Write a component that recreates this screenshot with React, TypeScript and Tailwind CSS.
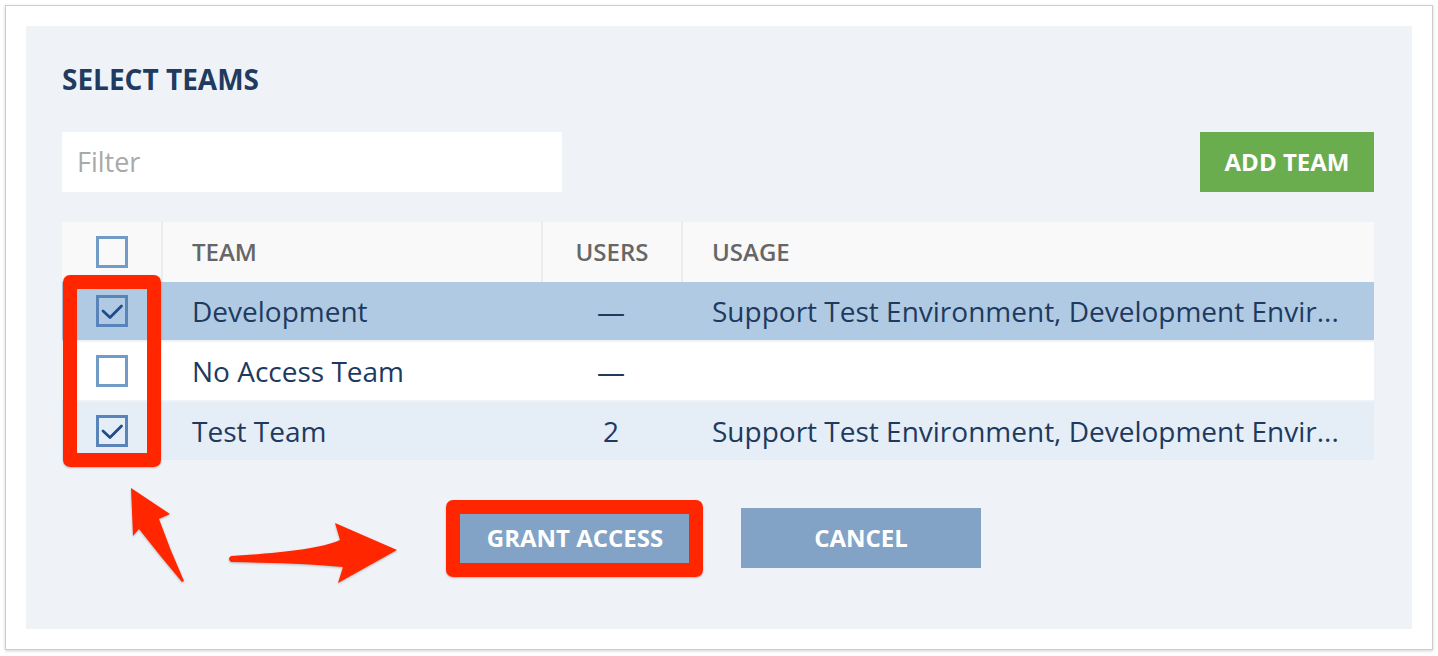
const font = { fontFamily: '"Open Sans", "Noto Sans", sans-serif' };

type Team = {
  name: string;
  users: string;
  usage: string;
  checked: boolean;
  bg: string;
};

const teams: Team[] = [
  {
    name: 'Development',
    users: '—',
    usage: 'Support Test Environment, Development Envir...',
    checked: true,
    bg: 'bg-[#b1cae3]',
  },
  { name: 'No Access Team', users: '—', usage: '', checked: false, bg: 'bg-white' },
  {
    name: 'Test Team',
    users: '2',
    usage: 'Support Test Environment, Development Envir...',
    checked: true,
    bg: 'bg-[#e5edf7]',
  },
];

function Checkbox({ checked }: { checked: boolean }) {
  return (
    <span
      className={`flex h-[32px] w-[32px] items-start justify-start border-[3px] ${
        checked ? 'border-[#5884b9]' : 'border-[#729bc8]'
      }`}
    >
      {checked && (
        <svg width="26" height="26" viewBox="0 0 26 26">
          <path
            d="M4 13 L11 19.5 L22.5 8"
            fill="none"
            stroke="#1f4d8a"
            strokeWidth="2.8"
            strokeLinecap="round"
            strokeLinejoin="round"
          />
        </svg>
      )}
    </span>
  );
}

export default function App() {
  return (
    <div className="relative h-[656px] w-[1438px] bg-white p-[5px]" style={font}>
      <div className="h-[645px] w-[1428px] border border-[#cdcdcd] bg-white p-[20px] shadow-[0_1px_3px_rgba(0,0,0,0.18)]">
        <div className="h-[603px] w-[1386px] bg-[#eff3f8] pl-[36px] pr-[38px] pt-[33px]">
          <h2 className="text-[28px] leading-[40px] font-bold text-[#1f3b60]">SELECT TEAMS</h2>

          <div className="mt-[33px] flex items-center justify-between">
            <div className="flex h-[60px] w-[500px] items-center bg-white pl-[15px] text-[27px] text-[#a9a9a9]">
              Filter
            </div>
            <button
              type="button"
              className="flex h-[60px] w-[174px] items-center justify-center bg-[#6aad4f] text-[24px] font-bold text-white"
            >
              ADD TEAM
            </button>
          </div>

          <div className="mt-[30px]">
            <div className="grid h-[60px] grid-cols-[99px_380px_140px_1fr] bg-[#f9f9f9] text-[24px] font-semibold text-[#666666]">
              <div className="flex items-center justify-center">
                <Checkbox checked={false} />
              </div>
              <div className="flex items-center border-l-2 border-[#ececec] pl-[29px]">TEAM</div>
              <div className="flex items-center justify-center border-l-2 border-[#ececec]">USERS</div>
              <div className="flex items-center border-l-2 border-[#ececec] pl-[29px]">USAGE</div>
            </div>
            {teams.map((t, i) => (
              <div
                key={t.name}
                className={`grid h-[58px] grid-cols-[99px_380px_140px_1fr] text-[28px] text-[#1e3a5f] ${t.bg} ${
                  i > 0 ? 'mt-[2px]' : ''
                }`}
              >
                <div className="flex items-center justify-center">
                  <Checkbox checked={t.checked} />
                </div>
                <div className="flex items-center pl-[31px]">{t.name}</div>
                <div className="flex items-center justify-center">{t.users}</div>
                <div className="flex items-center overflow-hidden pl-[31px] whitespace-nowrap">{t.usage}</div>
              </div>
            ))}
          </div>

          <div className="mt-[48px] flex justify-center gap-[46px]">
            <button
              type="button"
              className="flex h-[60px] w-[240px] items-center justify-center bg-[#82a3c6] text-[24px] font-bold text-white"
            >
              GRANT ACCESS
            </button>
            <button
              type="button"
              className="flex h-[60px] w-[240px] items-center justify-center bg-[#82a3c6] text-[24px] font-bold text-white"
            >
              CANCEL
            </button>
          </div>
        </div>
      </div>

      {/* annotation highlights */}
      <div className="pointer-events-none absolute left-[63px] top-[275px] h-[192px] w-[98px] rounded-[7px] border-[14px] border-[#ff2600] shadow-[0_1px_2px_rgba(0,0,0,0.25)]" />
      <div className="pointer-events-none absolute left-[446px] top-[500px] h-[77px] w-[257px] rounded-[7px] border-[14px] border-[#ff2600] shadow-[0_1px_2px_rgba(0,0,0,0.25)]" />

      <svg
        className="pointer-events-none absolute left-0 top-0"
        width="1438"
        height="656"
        viewBox="0 0 1438 656"
        style={{ filter: 'drop-shadow(0 1px 1px rgba(0,0,0,0.25))' }}
      >
        <path
          d="M131 488 L170 514 L159 519 Q170 550 184 581 L182 582 Q160 556 139 529 L133 536 Z"
          fill="#ff2600"
        />
        <path
          d="M231 556 C280 553 320 549 340 540 L335 523 L397 550 L338 583 L343 567 C300 563 265 563 231 562 Q227 559 231 556 Z"
          fill="#ff2600"
        />
      </svg>
    </div>
  );
}
